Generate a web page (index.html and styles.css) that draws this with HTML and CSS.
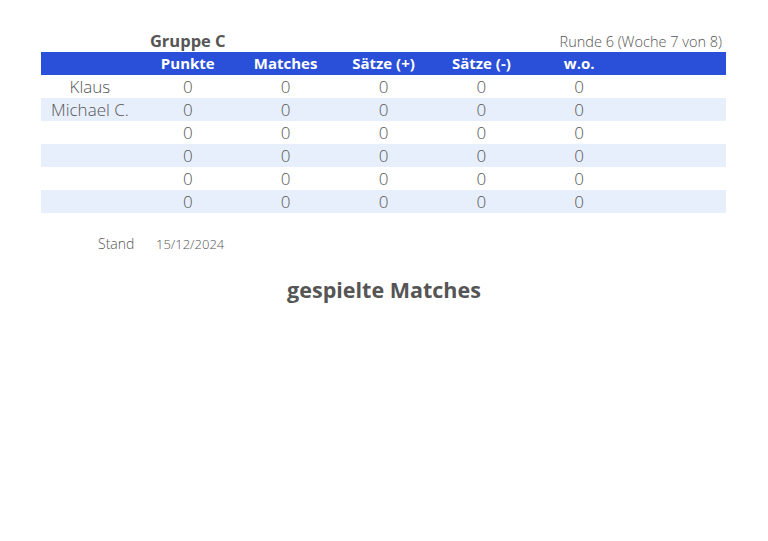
FILE: index.html
```html
<!DOCTYPE html>
<html>
<head>
<meta charset="utf-8">
<link rel="stylesheet" href="styles.css">
</head>
<body>
<div class="page">
  <div class="top">
    <div class="cell"></div>
    <div class="cell group">Gruppe C</div>
    <div class="round">Runde 6 (Woche 7 von 8)</div>
  </div>
  <div class="table">
    <div class="row head">
      <div class="cell"></div>
      <div class="cell">Punkte</div>
      <div class="cell">Matches</div>
      <div class="cell">Sätze (+)</div>
      <div class="cell">Sätze (-)</div>
      <div class="cell">w.o.</div>
      <div class="cell"></div>
    </div>
    <div class="row">
      <div class="cell">Klaus</div>
      <div class="cell">0</div><div class="cell">0</div><div class="cell">0</div><div class="cell">0</div><div class="cell">0</div><div class="cell"></div>
    </div>
    <div class="row alt">
      <div class="cell">Michael C.</div>
      <div class="cell">0</div><div class="cell">0</div><div class="cell">0</div><div class="cell">0</div><div class="cell">0</div><div class="cell"></div>
    </div>
    <div class="row">
      <div class="cell"></div>
      <div class="cell">0</div><div class="cell">0</div><div class="cell">0</div><div class="cell">0</div><div class="cell">0</div><div class="cell"></div>
    </div>
    <div class="row alt">
      <div class="cell"></div>
      <div class="cell">0</div><div class="cell">0</div><div class="cell">0</div><div class="cell">0</div><div class="cell">0</div><div class="cell"></div>
    </div>
    <div class="row">
      <div class="cell"></div>
      <div class="cell">0</div><div class="cell">0</div><div class="cell">0</div><div class="cell">0</div><div class="cell">0</div><div class="cell"></div>
    </div>
    <div class="row alt">
      <div class="cell"></div>
      <div class="cell">0</div><div class="cell">0</div><div class="cell">0</div><div class="cell">0</div><div class="cell">0</div><div class="cell"></div>
    </div>
  </div>
  <div class="stand">
    <span class="stand-label">Stand</span>
    <span class="stand-date">15/12/2024</span>
  </div>
  <h2 class="played">gespielte Matches</h2>
</div>
</body>
</html>
```
FILE: styles.css
```css
html, body {
  margin: 0;
  padding: 0;
  background: #ffffff;
}
body {
  font-family: "Open Sans", "Liberation Sans", sans-serif;
  color: #555555;
}
.page {
  padding: 30px 42px 0 41px;
}
.top {
  display: flex;
  align-items: flex-end;
  height: 22px;
}
.top .cell {
  width: 97.86px;
  text-align: center;
}
.group {
  font-weight: 700;
  font-size: 16.5px;
  line-height: 22px;
}
.round {
  flex: 1;
  text-align: right;
  font-size: 14.5px;
  font-weight: 300;
  line-height: 20px;
  padding-right: 4px;
  color: #555555;
}
.table {
  display: flex;
  flex-direction: column;
}
.row {
  display: grid;
  grid-template-columns: repeat(7, 1fr);
  height: 23px;
  align-items: center;
  font-size: 17px;
  font-weight: 300;
}
.row .cell {
  text-align: center;
  line-height: 23px;
}
.row.head {
  background: #2a4fd9;
  color: #ffffff;
  font-weight: 700;
  font-size: 15px;
}
.row.alt {
  background: #e7effc;
}
.stand {
  display: flex;
  font-size: 13px;
  font-weight: 300;
  margin-top: 22px;
  padding-left: 57px;
  line-height: 18px;
}
.stand-label {
  width: 58px;
  font-size: 14px;
}
.played {
  margin: 24px 0 0 0;
  text-align: center;
  font-size: 21.5px;
  font-weight: 700;
  line-height: 26px;
  padding-left: 1px;
}
```
